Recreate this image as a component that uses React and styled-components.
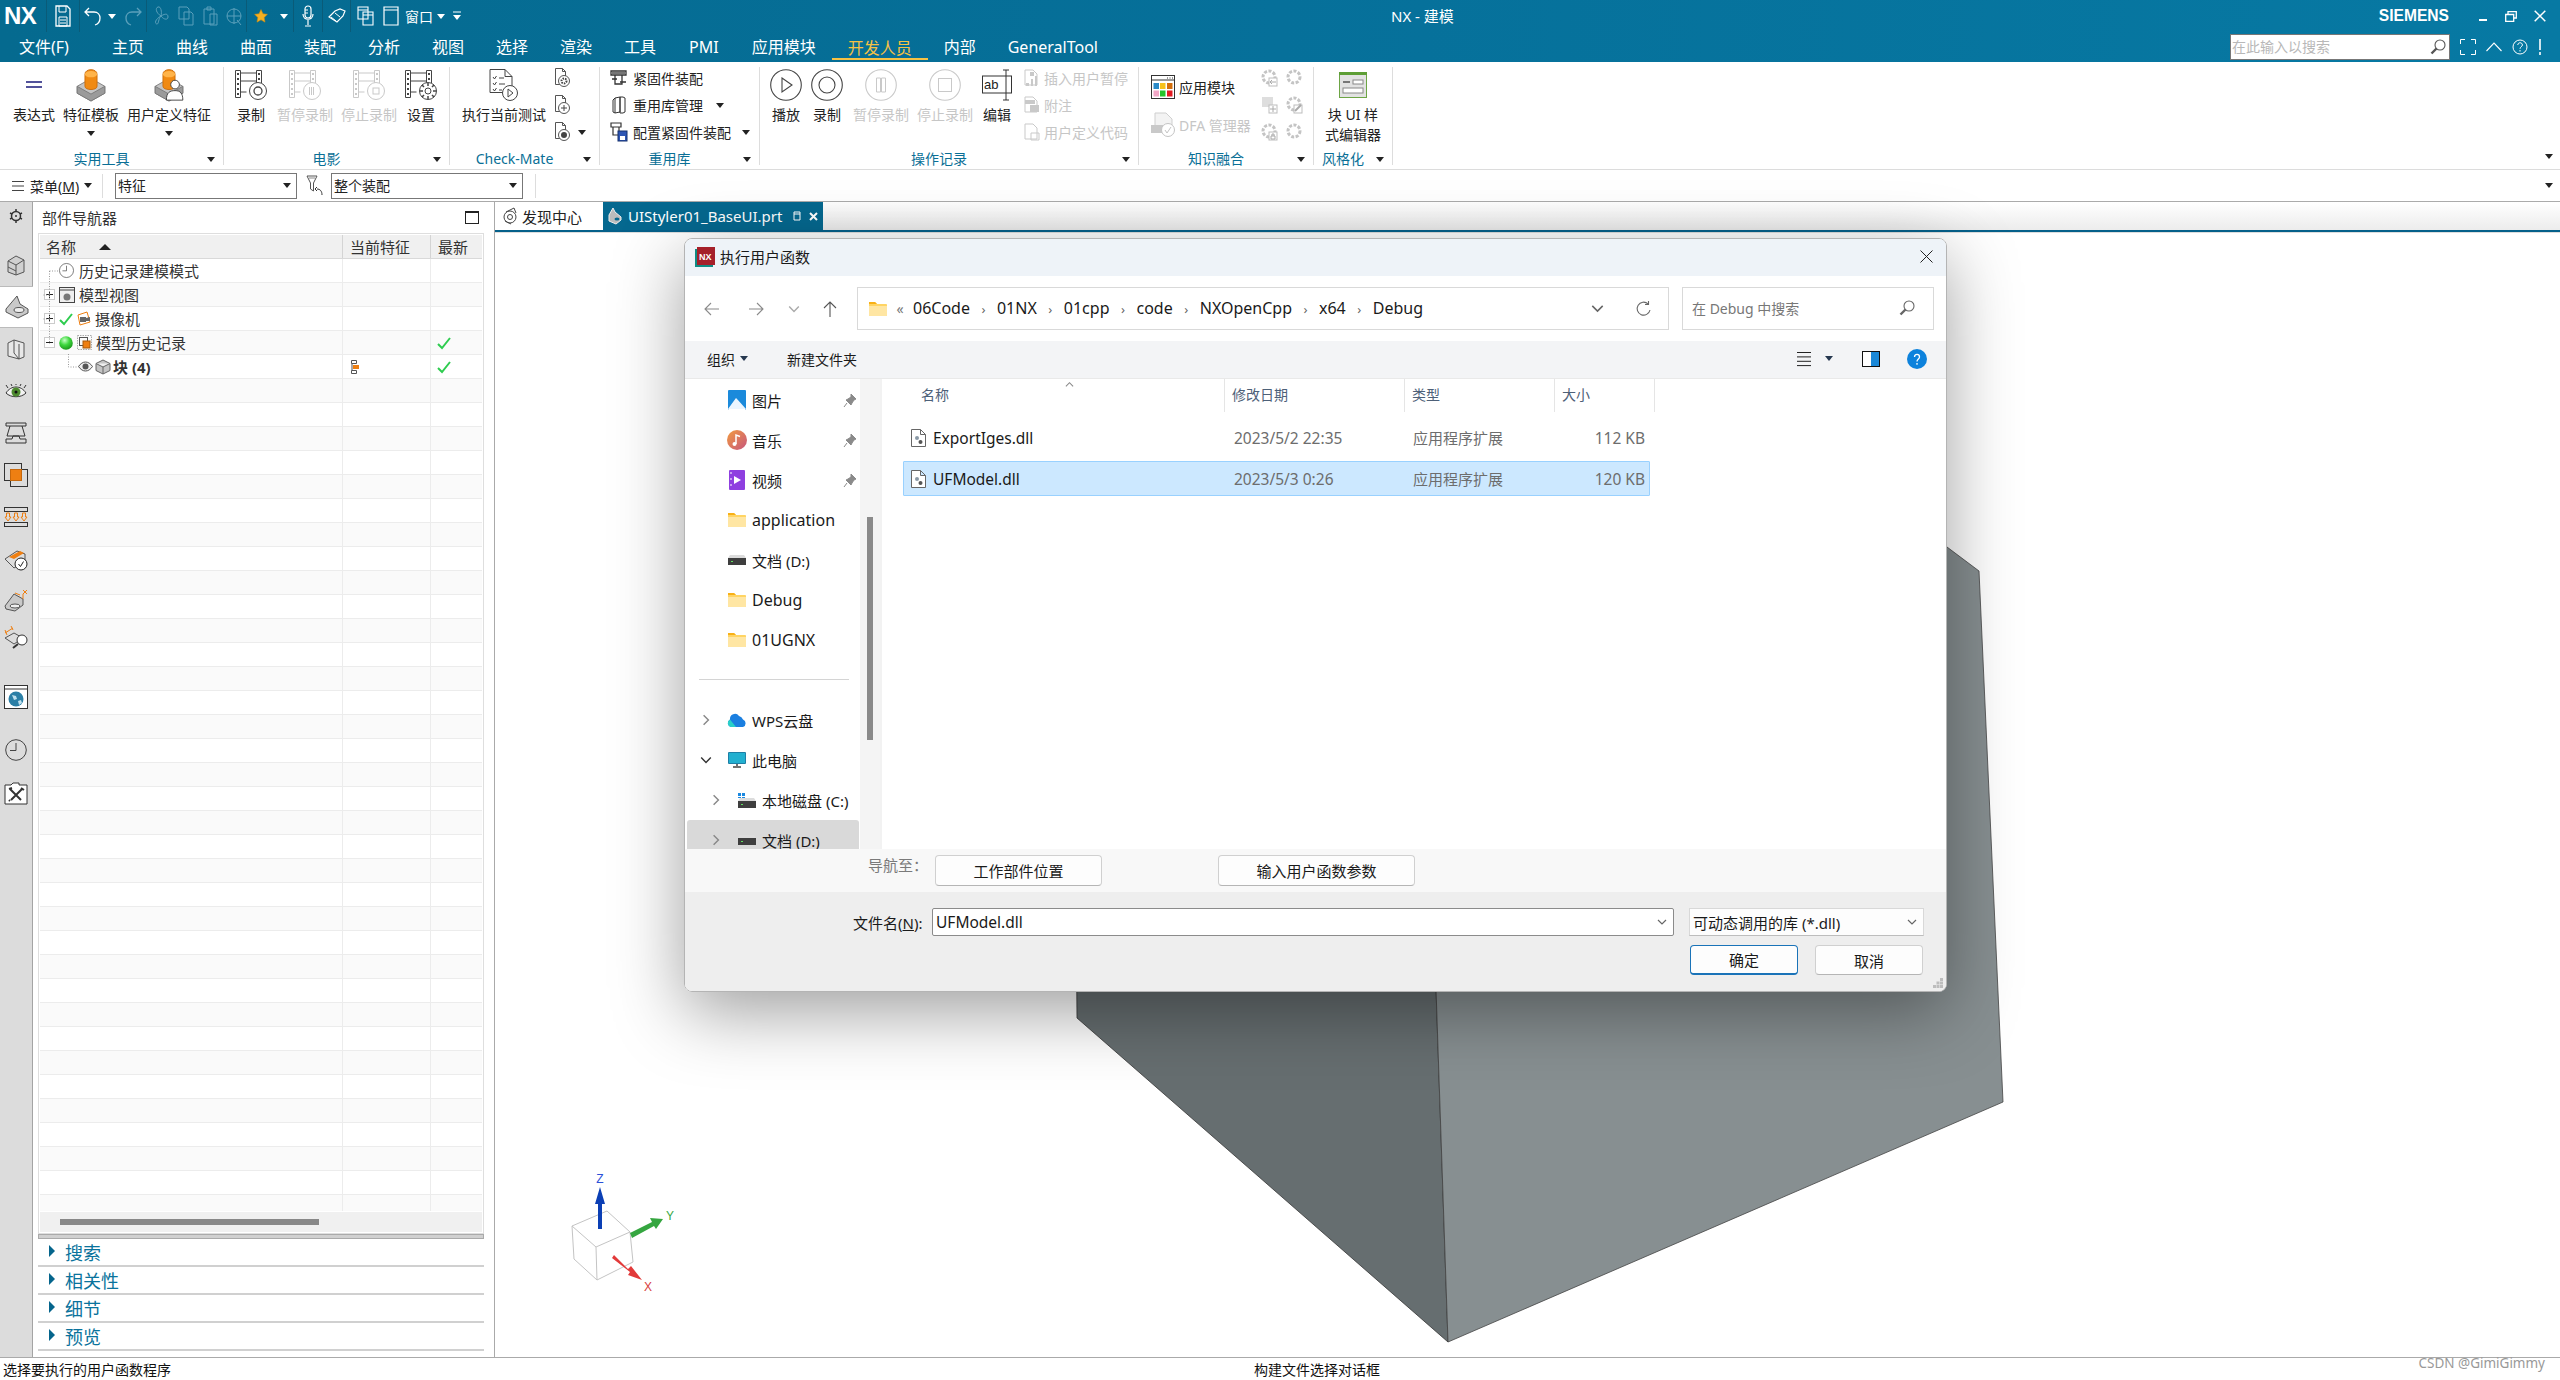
import React from 'react';
import styled, { createGlobalStyle } from 'styled-components';

const FONT = `"Noto Sans","Noto Sans CJK SC",sans-serif`;

const Global = createGlobalStyle`
  html, body { margin: 0; padding: 0; background: #fff; overflow: hidden; }
  body { font-family: ${FONT}; color: #222; }
  * { box-sizing: border-box; }
`;

const Page = styled.div`
  position: relative; width: 2560px; height: 1380px; display: flex; flex-direction: column; overflow: hidden;
`;
const Glyph = styled.svg`display: block; flex: none; overflow: visible;`;
const Ic = ({ w = 16, h = 16, vb, children }) => (
  <Glyph width={w} height={h} viewBox={vb || `0 0 ${w} ${h}`} fill="none">{children}</Glyph>
);

/* ---------- header ---------- */
const Head = styled.header`
  height: 62px; flex: none; color: #fff;
  background: linear-gradient(90deg, #056a8f 0%, #06709a 50%, #0779a3 100%);
`;
const TitleRow = styled.div`display: flex; align-items: center; height: 32px;`;
const Logo = styled.div`
  width: 46px; padding-left: 4px; font: 700 24px/32px "Liberation Sans", sans-serif; letter-spacing: -.5px;
`;
const QuickBtn = styled.div`
  width: ${p => p.$w}px; height: 32px; display: flex; align-items: center; justify-content: center;
  font-size: 14px; white-space: nowrap;
  ${p => p.$sep && 'border-left: 1px solid #0a5b78;'}
`;
const AppTitle = styled.div`margin-left: 923px; font-size: 15px; line-height: 32px; white-space: nowrap;`;
const Brand = styled.div`
  margin-left: auto; font: 700 15.6px/32px "Liberation Sans", sans-serif; letter-spacing: 0;
`;
const WinBtns = styled.div`display: flex; width: 111px; padding-left: 30px; gap: 17px; align-items: center;`;
const MenuRow = styled.div`display: flex; align-items: center; height: 30px; padding-left: 3px;`;
const MenuItem = styled.div`
  position: relative; height: 30px; padding: 0 ${p => p.$pad ?? 16}px; font-size: 16px; line-height: 30px; white-space: nowrap;
  margin-right: ${p => p.$mr || 0}px;
  color: ${p => p.$on ? '#f6c244' : '#fff'};
  ${p => p.$on && 'box-shadow: inset 0 -2px 0 0 #f6c244; height: 28px; margin-top: -2px; line-height: 32px;'}
`;
const HeadSearch = styled.div`
  margin-left: auto; width: 220px; height: 26px; background: #fff; border: 1px solid #777; color: #b8b8b8;
  font-size: 14px; line-height: 24px; display: flex; align-items: center; justify-content: space-between; padding: 0 3px 0 1px;
`;
const HeadTools = styled.div`display: flex; align-items: center; width: 110px; padding-left: 10px; gap: 10px;`;

/* ---------- ribbon ---------- */
const Ribbon = styled.div`
  height: 108px; flex: none; display: flex; background: #fff; border-bottom: 1px solid #dcdcdc;
`;
const Group = styled.section`
  width: ${p => p.$w}px; flex: none; height: 98px; margin-top: 5px; border-right: 1px solid #ddd;
  display: flex; flex-direction: column;
`;
const GroupBody = styled.div`flex: 1; display: flex; align-items: flex-start; min-height: 0;`;
const GroupFoot = styled.div`
  height: 20px; margin-bottom: -4px; display: flex; align-items: center;
  color: #0a6f96; font-size: 14px; line-height: 20px;
`;
const GroupName = styled.div`flex: 1; text-align: center; white-space: nowrap;`;
const Caret = styled.span`
  flex: none; width: 0; height: 0; border-left: 4px solid transparent; border-right: 4px solid transparent;
  border-top: 5px solid ${p => p.$c || '#222'}; margin-left: ${p => p.$ml ?? 0}px; margin-right: ${p => p.$mr ?? 0}px;
`;
const Big = styled.div`
  width: ${p => p.$w}px; margin-left: ${p => p.$ml || 0}px; flex: none;
  display: flex; flex-direction: column; align-items: center;
  color: ${p => p.$dim ? '#c6c6c6' : '#222'}; font-size: 14px; line-height: 20px; white-space: nowrap; text-align: center;
`;
const BigIcon = styled.div`height: 35px; margin-bottom: 3px; display: flex; align-items: center; justify-content: center;`;
const BigCaret = styled.div`height: 16px; display: flex; align-items: center; justify-content: center;`;
const SmallCol = styled.div`
  display: flex; flex-direction: column; gap: 5px; margin-left: ${p => p.$ml || 0}px; flex: none;
  ${p => p.$w && `width: ${p.$w}px;`}
`;
const SmallRow = styled.div`
  height: 22px; display: flex; align-items: center; gap: ${p => p.$gap ?? 4}px; font-size: 14px; white-space: nowrap;
  color: ${p => p.$dim ? '#c6c6c6' : '#222'};
  ${p => p.$center && 'justify-content: center;'}
`;
const WideRow = styled.div`
  height: 38px; display: flex; align-items: center; gap: 4px; padding-left: 12px; font-size: 14px; white-space: nowrap;
  color: ${p => p.$dim ? '#c6c6c6' : '#222'};
`;
const WideCol = styled.div`width: 119px; flex: none; display: flex; flex-direction: column; margin-top: 1px;`;
const RibbonEnd = styled.div`display: flex; height: 5px; margin: auto 7px ${p => p.$mb ?? 10}px auto;`;
const ToolEnd = styled.div`display: flex; height: 5px; margin: 0 7px 0 auto;`;

/* ---------- toolbar ---------- */
const Toolbar = styled.div`
  height: 32px; flex: none; display: flex; align-items: center; padding-left: 12px; background: #fff;
  border-bottom: 1px solid #aaa; font-size: 14px;
`;
const MenuLabel = styled.div`margin-left: 6px; width: 54px; white-space: nowrap;`;
const ToolSep = styled.div`width: 1px; height: 24px; background: #ddd; margin-left: ${p => p.$ml}px; margin-right: ${p => p.$mr}px;`;
const Combo = styled.div`
  width: ${p => p.$w}px; height: 26px; margin-left: ${p => p.$ml || 0}px; border: 1px solid #777; display: flex;
  align-items: center; justify-content: space-between; padding: 0 5px 0 2px; font-size: 14px; line-height: 24px;
`;
const FunnelBox = styled.div`width: 18px; margin-left: 9px; flex: none;`;

/* ---------- main ---------- */
const Main = styled.div`flex: 1; min-height: 0; display: flex;`;
const Rail = styled.nav`
  width: 33px; flex: none; background: #dcdcdc; border-right: 1px solid #a4a4a4; display: flex; flex-direction: column;
`;
const RailItem = styled.div`
  height: ${p => p.$h || 42}px; margin-top: ${p => p.$mt || 0}px; display: flex; align-items: center; justify-content: center;
  ${p => p.$on && 'background: #fff; margin-right: -1px; border-top: 1px solid #bbb; border-bottom: 1px solid #bbb;'}
`;
const Nav = styled.aside`
  width: 462px; flex: none; display: flex; flex-direction: column; background: #fff; border-right: 1px solid #aaa; padding: 0 10px 6px 5px;
`;
const NavHead = styled.div`
  height: 31px; flex: none; display: flex; align-items: center; justify-content: space-between; padding: 0 5px 0 4px; font-size: 15px; color: #333;
`;
const MaxBox = styled.div`width: 14px; height: 13px; border: 1px solid #222; border-top-width: 2px;`;
const Table = styled.div`
  position: relative; flex: 1; min-height: 0; border: 1px solid #dedede; padding: 1px; display: flex; flex-direction: column; overflow: hidden;
`;
const TableRows = styled.div`flex: 1; min-height: 0; overflow: hidden;`;
const Row = styled.div`
  display: grid; grid-template-columns: 303px 88px 1fr; height: 24px;
  background: ${p => p.$head ? '#f0f0f0' : p.$alt ? '#fafafa' : '#fff'};
  border-bottom: 1px solid ${p => p.$head ? '#d9d9d9' : '#ececec'}; font-size: 15px; color: #333;
`;
const Cell = styled.div`
  display: flex; align-items: center; gap: ${p => p.$gap ?? 0}px; padding-left: ${p => p.$pl || 0}px; white-space: nowrap; min-width: 0;
  border-right: 1px solid ${p => p.$head ? '#d4d4d4' : '#ececec'}; font-weight: ${p => p.$bold ? 700 : 400};
  ${p => p.$last && 'border-right: 0;'}
`;
const Expander = styled.span`
  width: 11px; height: 11px; flex: none; border: 1px solid #ccc; background: #fff; position: relative;
  &::before { content: ''; position: absolute; left: 1px; right: 1px; top: 4px; height: 1px; background: #222; }
  ${p => p.$plus && `&::after { content: ''; position: absolute; top: 1px; bottom: 1px; left: 4px; width: 1px; background: #222; }`}
`;
const Guides = styled.svg`position: absolute; left: 0; top: 0; pointer-events: none;`;
const HScroll = styled.div`height: 20px; flex: none; background: #f0f0f0; padding: 7px 0 0 20px; margin-top: 1px;`;
const HThumb = styled.div`width: 259px; height: 6px; background: #888;`;
const Splitter = styled.div`height: 5px; flex: none; background: #d0d0d0; border: 1px solid #aaa; `;
const Section = styled.div`
  height: 28px; flex: none; display: flex; align-items: center; gap: 10px; padding: 2px 0 0 11px; border-bottom: 2px solid #d0d0d0;
  color: #0a739c; font-size: 18px; line-height: 26px;
`;
const Tri = styled.span`
  width: 0; height: 0; border-top: 6px solid transparent; border-bottom: 6px solid transparent; border-left: 6px solid #05658c; margin-top: -4px;
`;
const View = styled.div`flex: 1; min-width: 0; display: flex; flex-direction: column;`;
const Tabs = styled.div`
  height: 30px; flex: none; display: flex; border-bottom: 2px solid #05608a; background: linear-gradient(#fff, #ececec); font-size: 15px;
`;
const Tab = styled.div`
  width: ${p => p.$w}px; flex: none; display: flex; align-items: center; gap: 5px; padding-left: ${p => p.$pl}px; white-space: nowrap;
  background: ${p => p.$on ? '#05688f' : '#fff'}; color: ${p => p.$on ? '#fff' : '#222'};
`;
const TabTail = styled.div`display: flex; align-items: center; gap: 8px; margin-left: 6px;`;
const Canvas = styled.div`position: relative; flex: 1; min-height: 0; background: #fff; border-top: 1px solid #ddd;`;
const Scene = styled.svg`position: absolute; inset: 0; width: 100%; height: 100%;`;
const Status = styled.footer`
  height: 23px; flex: none; border-top: 1px solid #aaa; background: #fff; display: grid; grid-template-columns: 1251px 1fr auto; align-items: center;
  padding: 0 15px 0 3px; font-size: 14px; color: #111;
`;
const StatusMid = styled.div`white-space: nowrap;`;
const Watermark = styled.div`font-size: 13.5px; color: #999; margin-top: -12px; white-space: nowrap;`;

/* ---------- dialog ---------- */
const Dialog = styled.div`
  position: absolute; left: 684px; top: 238px; width: 1263px; height: 754px; display: flex; flex-direction: column;
  border: 1px solid #b4b4b4; border-radius: 8px; background: #fff; overflow: hidden; font-size: 15px; color: #1a1a1a;
`;
const DialogShadow = styled.div`
  position: absolute; left: 684px; top: 238px; width: 1263px; height: 754px; border-radius: 8px;
  box-shadow: 0 20px 70px rgba(0,0,0,.38);
`;
const DTitle = styled.div`
  height: 37px; flex: none; background: #eef3f8; display: flex; align-items: center; padding: 0 13px 2px 10px; gap: 5px;
`;
const DClose = styled.div`margin-left: auto;`;
const Addr = styled.div`height: 65px; flex: none; display: flex; align-items: center; padding-left: 5px;`;
const NavBtn = styled.div`width: ${p => p.$w}px; flex: none; display: flex; justify-content: center; align-items: center; margin-left: ${p => p.$ml || 0}px;`;
const PushRight = styled.div`margin-left: auto; display: flex; align-items: center;`;
const PathBox = styled.div`
  width: 812px; height: 43px; margin-left: 7px; border: 1px solid #d9d9d9; flex: none; display: flex; align-items: center; padding-left: 11px;
`;
const Crumb = styled.span`white-space: nowrap; font-size: 16px; line-height: 38px; margin-top: -2px;`;
const CrumbSep = styled.span`width: 27px; text-align: center; color: #666; font-size: 13px; flex: none;`;
const Laquo = styled.span`width: 26px; text-align: center; color: #777; font-size: 14px; flex: none;`;
const SearchBox = styled.div`
  width: 252px; height: 43px; margin-left: 13px; border: 1px solid #d9d9d9; display: flex; align-items: center; justify-content: space-between;
  padding: 0 18px 2px 9px; color: #777; font-size: 14px; flex: none;
`;
const Band = styled.div`
  height: 38px; flex: none; background: #f3f4f6; border-bottom: 1px solid #e9e9e9; display: flex; align-items: center; padding: 0 19px 2px 22px; font-size: 14px;
`;
const BandBtn = styled.div`display: flex; align-items: center; gap: 5px; white-space: nowrap; margin-left: ${p => p.$ml || 0}px;`;
const Body = styled.div`flex: 1; min-height: 0; display: flex;`;
const Side = styled.div`width: 175px; flex: none; padding-top: 1px; overflow: hidden;`;
const SideRow = styled.div`
  position: relative; height: 40px; display: flex; align-items: center; padding-left: ${p => 14 + (p.$lvl || 0) * 10 - (p.$sel ? 2 : 0)}px; padding-right: 4px; white-space: nowrap;
  font-size: ${p => p.$latin ? 16 : 15}px;
  ${p => p.$sel && 'background: #d9d9d9; border-radius: 3px; margin: 0 1px 0 2px;'}
`;
const SideChev = styled.div`width: 14px; flex: none; margin-right: 15px; display: flex; justify-content: center;`;
const SideIcon = styled.div`width: 18px; flex: none; margin-right: 6px; display: flex; justify-content: center; align-items: center;`;
const Pin = styled.div`margin-left: auto;`;
const SideRule = styled.div`height: 40px; padding: 19px 11px 0 14px;`;
const SideRuleLine = styled.div`height: 1px; background: #d4d4d4;`;
const Track = styled.div`width: 20px; flex: none; background: #f4f4f4; padding: 138px 7px 0; border-right: 2px solid #f4f4f4; `;
const Thumb = styled.div`width: 6px; height: 223px; background: #8a8a8a;`;
const List = styled.div`flex: 1; min-width: 0; border-left: 2px solid #f2f2f2; position: relative;`;
const ListHead = styled.div`display: grid; grid-template-columns: 343px 180px 150px 100px; height: 33px; width: 773px;`;
const HCol = styled.div`
  border-right: 1px solid #e5e5e5; padding-left: ${p => p.$pl}px; color: #4d6078; font-size: 14px; line-height: 32px; white-space: nowrap;
`;
const SortMark = styled.div`position: absolute; left: 183px; top: 1px;`;
const FileRow = styled.div`
  margin: ${p => p.$first ? 8 : 6}px 0 0 21px; width: 747px; height: 35px; display: grid; grid-template-columns: 322px 179px 151px 1fr; align-items: center;
  border: 1px solid ${p => p.$sel ? '#99d1ff' : 'transparent'}; background: ${p => p.$sel ? '#cce8ff' : 'transparent'}; border-radius: 1px;
  color: #6d6d6d; font-size: 15.5px; white-space: nowrap;
`;
const FileName = styled.div`display: flex; align-items: center; gap: 7px; padding-left: 7px; color: #1a1a1a;`;
const FileCol = styled.div`
  padding-left: ${p => p.$pl || 8}px; padding-right: ${p => p.$pr || 0}px; text-align: ${p => p.$right ? 'right' : 'left'};
  ${p => p.$cjk && 'font-size: 15px;'}
`;
const Foot1 = styled.div`height: 43px; flex: none; background: #f8f8f8; display: flex; align-items: flex-start; padding: 6px 0 0 183px;`;
const GoLabel = styled.div`width: 67px; color: #7a7a7a; font-size: 15px; line-height: 20px; white-space: nowrap;`;
const PushBtn = styled.div`
  width: ${p => p.$w}px; height: ${p => p.$h || 31}px; margin-left: ${p => p.$ml || 0}px; flex: none; background: #fdfdfd;
  border: 1px solid ${p => p.$primary ? '#1a73b8' : '#d0d0d0'}; border-radius: 4px; display: flex; align-items: center; justify-content: center;
  ${p => p.$primary ? 'border-bottom-width: 2px;' : 'border-bottom-color: #b5b5b5;'}
  font-size: 15px; white-space: nowrap;
`;
const Foot2 = styled.div`position: relative; height: 99px; flex: none; background: #eee; padding-top: 16px;`;
const NameRow = styled.div`display: flex; align-items: center; padding-left: 168px; height: 28px;`;
const NameLabel = styled.div`width: 79px; white-space: nowrap;`;
const NameInput = styled.div`
  width: 742px; height: 28px; flex: none; background: #fff; border: 1px solid #8b8b8b; border-radius: 2px; font-size: 15.5px;
  display: flex; align-items: center; justify-content: space-between; padding: 0 6px 0 3px;
`;
const FilterSel = styled.div`
  width: 235px; height: 28px; flex: none; margin-left: 15px; background: #fdfdfd; border: 1px solid #d8d8d8; border-bottom-color: #bdbdbd;
  display: flex; align-items: center; justify-content: space-between; padding: 0 6px 0 3px; white-space: nowrap;
`;
const BtnRow = styled.div`display: flex; justify-content: flex-end; gap: 17px; margin-top: 9px; padding-right: 23px;`;
const Grip = styled.div`position: absolute; right: 3px; bottom: 3px;`;

/* ---------- icons ---------- */
const Chev = ({ dir = 'down', c = '#666', s = 10 }) => {
  const d = { down: 'M1 3l4 4 4-4', up: 'M1 7l4-4 4 4', right: 'M3 1l4 4-4 4' }[dir];
  return <Ic w={s} h={s} vb="0 0 10 10"><path d={d} stroke={c} strokeWidth="1.2" /></Ic>;
};
const Wh = '#fff';
const Dm = '#5ba0bb';
const QSave = () => <Ic w={16} h={22}><path d="M1 1h11l3 3v17H1z" stroke={Wh} strokeWidth="1.3" /><path d="M4 1v6h7V1M4 12h8v9H4zM5 15h6M5 18h6" stroke={Wh} /></Ic>;
const QUndo = ({ c = Wh, flip }) => <Ic w={18} h={20}><g transform={flip ? 'translate(18 0) scale(-1 1)' : undefined}><path d="M5 2L1 6l4 4M1 6h9c4 0 6 3 6 6 0 3-2 6-5 7" stroke={c} strokeWidth="1.3" /></g></Ic>;
const QFan = () => <Ic w={16} h={22}><path d="M8 11C3 8 2 3 5 2s4 5 3 9zm0 0c5-3 7-2 7 1s-4 3-7-1zm0 0c-3 3-2 8-4 8s-3-4 4-8z" stroke={Dm} /></Ic>;
const QCopy = () => <Ic w={16} h={20}><path d="M1 1h8l2 2v10H1zM6 6h7l2 2v11H6z" stroke={Dm} /></Ic>;
const QPaste = () => <Ic w={16} h={20}><path d="M2 3h10v15H2zM5 1h4v3H5zM8 8h7v11H8z" stroke={Dm} /></Ic>;
const QDel = () => <Ic w={16} h={20}><circle cx="8" cy="10" r="7" stroke={Dm} /><path d="M8 2v16M1 10h14M11 14l4 5" stroke={Dm} /></Ic>;
const QStar = () => <Ic w={14} h={14} vb="0 0 24 24"><path d="M12 1l3.4 7.3 7.6.9-5.6 5.4 1.5 7.9L12 18.6l-6.9 3.9 1.5-7.9L1 9.2l7.6-.9z" fill="#f6b021" stroke="#c98a10" /></Ic>;
const QMic = () => <Ic w={12} h={22}><rect x="3" y="1" width="6" height="12" rx="3" stroke={Wh} strokeWidth="1.2" /><path d="M3 5h3M3 8h3" stroke={Wh} /><path d="M1 9c0 7 10 7 10 0M6 15v5M3 21h6" stroke={Wh} strokeWidth="1.2" /></Ic>;
const QTag = () => <Ic w={18} h={16}><path d="M1 9l6-6 5-2 5 2-2 5-6 6z" stroke={Wh} strokeWidth="1.2" /><path d="M3 9l5 4M7 5l5 4" stroke={Wh} /></Ic>;
const QWins = () => <Ic w={17} h={20}><path d="M1 1h10v12H1zM1 4h10M6 6h10v13H6zM6 9h10" stroke={Wh} strokeWidth="1.1" fill="#06709a" /></Ic>;
const QWin = () => <Ic w={16} h={20}><path d="M1 1h14v18H1zM1 4h14" stroke={Wh} strokeWidth="1.2" /></Ic>;
const LineCaret = () => <Ic w={8} h={10}><path d="M0 1h8" stroke={Wh} /><path d="M0 4h8L4 9z" fill={Wh} /></Ic>;
const WinMin = () => <Ic w={9} h={10}><path d="M0 9h8" stroke={Wh} strokeWidth="2" /></Ic>;
const WinRes = () => <Ic w={12} h={11}><path d="M3 3V.7h8.3V7H9M.7 3.5h8v6.8h-8z" stroke={Wh} strokeWidth="1.3" /></Ic>;
const WinX = () => <Ic w={12} h={12}><path d="M.7.7l10.6 10.6M11.3.7L.7 11.3" stroke={Wh} strokeWidth="1.5" /></Ic>;
const Magn = ({ c = '#555' }) => <Ic w={16} h={16}><circle cx="10" cy="6" r="5" stroke={c} strokeWidth="1.1" /><path d="M6.5 9.5L1.5 14.5" stroke={c} strokeWidth="2.4" /></Ic>;
const Fullscr = () => <Ic w={16} h={16}><path d="M.5 5V.5H5M11 .5h4.5V5M15.5 11v4.5H11M5 15.5H.5V11" stroke={Wh} /></Ic>;
const UpWide = () => <Ic w={16} h={10}><path d="M.5 9L8 1l7.5 8" stroke={Wh} strokeWidth="1.1" /></Ic>;
const HelpO = () => <Ic w={16} h={16}><circle cx="8" cy="8" r="7" stroke={Wh} /><path d="M5.8 6c0-3 4.6-3 4.6 0 0 1.800-2.400 1.800-2.400 3.800M8 11v1.500" stroke={Wh} /></Ic>;
const Bang = () => <Ic w={4} h={16}><path d="M2 0v11M2 13v3" stroke={Wh} strokeWidth="1.6" /></Ic>;

const Cylinder = () => (
  <>
    <path d="M0 20l16-9 16 9v8l-16 9-16-9z" fill="#c4c4c4" stroke="#777" />
    <path d="M0 20l16 9 16-9v8l-16 9-16-9z" fill="#9b9b9b" stroke="#777" />
    <path d="M9 6c0-7 14-7 14 0v14c0 5-14 5-14 0z" fill="#f08a13" stroke="#c86a08" />
    <ellipse cx="16" cy="6" rx="7" ry="3.600" fill="#ffb44a" />
  </>
);
const Template = () => <Ic w={32} h={32} vb="0 0 32 37"><Cylinder /></Ic>;
const UserFeat = () => (
  <Ic w={32} h={32} vb="0 0 32 37"><Cylinder />
    <circle cx="23" cy="18" r="5" fill="#fff" stroke="#333" />
    <path d="M13 36c0-9 4-11 10-11s9 3 9 11z" fill="#fff" stroke="#333" />
  </Ic>
);
const Expr = () => <Ic w={20} h={10}><path d="M2 2h16M2 7h16" stroke="#1a1a7a" strokeWidth="1.500" /></Ic>;
const Film = ({ dim, badge }) => {
  const c = dim ? '#c9c9c9' : '#444';
  return (
    <Ic w={32} h={30}>
      <path d="M.5.5h5v27h-5zM21.500.5h5v13h-5zM5.500 3h16M5.500 11h16M5.500 22h6" stroke={c} />
      <path d="M2 3h2v2H2zM2 8h2v2H2zM2 13h2v2H2zM2 18h2v2H2zM2 23h2v2H2zM23 3h2v2h-2zM23 8h2v2h-2z" fill={c} />
      <circle cx="23" cy="21" r="8.500" fill="#fff" stroke={c} />
      {badge === 'rec' && <circle cx="23" cy="21" r="4" stroke={c} strokeWidth="1.300" />}
      {badge === 'pause' && <path d="M20.500 17v8M22.500 17v8M24.500 17v8" stroke={c} />}
      {badge === 'stop' && <rect x="20" y="18" width="6" height="6" stroke={c} />}
      {badge === 'gear' && <><circle cx="23" cy="21" r="3" stroke={c} /><path d="M23 13v3M23 26v3M15 21h3M28 21h3M17 15l2 2M27 25l2 2M29 15l-2 2M19 25l-2 2" stroke={c} strokeWidth="1.500" /></>}
    </Ic>
  );
};
const Round = ({ kind, dim }) => {
  const c = dim ? '#c9c9c9' : '#444';
  return (
    <Ic w={32} h={32}>
      <circle cx="16" cy="16" r="15.300" stroke={c} strokeWidth="1.100" fill="#fff" />
      {kind === 'play' && <path d="M12 9l10 7-10 7z" stroke={c} strokeWidth="1.100" />}
      {kind === 'rec' && <circle cx="16" cy="16" r="8" stroke={c} strokeWidth="1.100" />}
      {kind === 'pause' && <path d="M11.500 9h4v14h-4zM16.500 9h4v14h-4z" stroke={c} />}
      {kind === 'stop' && <rect x="9.500" y="9.500" width="13" height="13" stroke={c} />}
    </Ic>
  );
};
const EditAb = () => (
  <Ic w={30} h={32}>
    <rect x=".5" y="7" width="29" height="17" stroke="#333" />
    <path d="M21 1h6M21 31h6M24 1v30" stroke="#333" />
    <text x="2" y="20" fontSize="13" fill="#222" fontFamily="Liberation Sans">ab</text>
  </Ic>
);
const Checklist = () => (
  <Ic w={30} h={32}>
    <path d="M1 .5h15l7 7v16H1zM16 .5v7h7" stroke="#444" />
    <path d="M4 8l1.500 2 2-3M10 9h5M4 14l1.500 2 2-3M10 15h6M4 20l1.500 2 2-3M10 21h3" stroke="#444" />
    <circle cx="21" cy="24" r="7.500" fill="#fff" stroke="#444" /><path d="M19 20l5 4-5 4z" stroke="#444" />
  </Ic>
);
const SmallDoc = ({ kind }) => (
  <Ic w={15} h={20}>
    <path d="M.5.500h7l3 3v13h-10zM7.500.500v3h3" stroke="#555" />
    <circle cx="9" cy="13" r="5.500" fill="#fff" stroke="#555" />
    {kind === 'plus' && <path d="M9 10v6M6 13h6" stroke="#444" />}
    {kind === 'rec' && <circle cx="9" cy="13" r="3" fill="#444" />}
    {kind === 'gear' && <circle cx="9" cy="13" r="2.500" stroke="#444" strokeDasharray="1.500 1" strokeWidth="2" />}
  </Ic>
);
const Fastener = () => <Ic w={18} h={16}><path d="M1 1h15v4H1zM5 5h7v9H5zM2 9h5M10 12h6" stroke="#333" strokeWidth="1.300" /><path d="M2 2h13v2H2z" fill="#777" /></Ic>;
const Books = () => <Ic w={14} h={18}><path d="M3 2l5-1v15l-5 1zM8 1h3l2 1v14l-2 1H8zM3 2L1 4v12l2 1" stroke="#333" /></Ic>;
const Fastener2 = () => <Ic w={18} h={20}><path d="M1 1h10v4H1zM3 5h6v8H3z" stroke="#333" strokeWidth="1.200" /><rect x="8" y="9" width="9" height="10" fill="#2d55b4" stroke="#14306e" /><rect x="10" y="14" width="5" height="4" fill="#fff" /></Ic>;
const DimDoc = ({ t }) => (
  <Ic w={16} h={18}>
    <path d="M1 1h8l4 4v11H1z" stroke="#c9c9c9" />
    {t === 'bars' && <path d="M2 14h3v3H2zM7 10h2v7H7zM11 7h2v10h-2zM6 3h4v4H6z" fill="#c9c9c9" />}
    {t === 'note' && <path d="M1 4h10v4H1zM6 9h9v7H6z" fill="#c9c9c9" />}
    {t === 'code' && <path d="M7 10h8v7H7z" stroke="#c9c9c9" />}
  </Ic>
);
const AppMod = () => (
  <Ic w={24} h={24}>
    <rect x=".5" y=".5" width="23" height="23" stroke="#333" fill="#fff" />
    <path d="M1 5h22" stroke="#333" />
    <path d="M16 3h1M18.500 3h1M21 3h1" stroke="#333" />
    <rect x="2.500" y="8" width="5.500" height="6" fill="#2a8ac8" /><rect x="9" y="8" width="5.500" height="6" fill="#f7c21c" /><rect x="16" y="8" width="5.500" height="6" fill="#d46f0c" />
    <rect x="2.500" y="15.500" width="5.500" height="6" fill="#f2a6c6" /><rect x="9" y="15.500" width="5.500" height="6" fill="#25c42a" /><rect x="16" y="15.500" width="5.500" height="6" fill="#e41b23" />
  </Ic>
);
const DfaDoc = () => (
  <Ic w={24} h={26}>
    <path d="M4 1h11l6 6v10H4z" stroke="#cfcfcf" fill="#f3f3f3" />
    <rect x="0" y="13" width="12" height="8" fill="#c9c9c9" />
    <circle cx="17" cy="18" r="6.500" fill="#fff" stroke="#c4c4c4" /><path d="M14 18l2 3 4-6" stroke="#c4c4c4" />
  </Ic>
);
const KfGear = ({ m }) => (
  <Ic w={18} h={18}>
    {m === 'plus'
      ? <path d="M1 1h11v10H1z" fill="#dedede" />
      : <circle cx="8" cy="8" r="6" stroke="#c4c4c4" strokeWidth="3" strokeDasharray="3 1.500" />}
    {m !== 'none' && <rect x="8" y="9" width="8" height="8" fill="#fff" stroke="#bdbdbd" />}
    {m === 'plus' && <path d="M12 10v6M9 13h6" stroke="#aaa" />}
    {m === 'arrow' && <path d="M15 13H9M11 11l-2 2 2 2" stroke="#aaa" />}
    {m === 'lock' && <path d="M10 13h4v3h-4zM11 13v-2h2v2" stroke="#aaa" />}
    {m === 'pen' && <path d="M9 15l6-6" stroke="#aaa" strokeWidth="2" />}
  </Ic>
);
const BlockUI = () => (
  <Ic w={28} h={26}>
    <rect x=".5" y=".5" width="27" height="25" fill="#e2e2e2" stroke="#6da545" />
    <rect x="0" y="0" width="28" height="3" fill="#5e9e36" />
    <path d="M4 10h7" stroke="#777" strokeWidth="2" />
    <rect x="14" y="8" width="10" height="4" fill="#fff" stroke="#888" />
    <rect x="4" y="16" width="20" height="5" fill="#fff" stroke="#888" />
  </Ic>
);
const Funnel = () => <Ic w={18} h={22}><path d="M1 1h10L7.500 8v8l-3-2V8z" stroke="#555" /><path d="M3 3h6" stroke="#888" /><path d="M16 20c0-4-2-6-5-6M11 12l-2 2 2 2" stroke="#333" /></Ic>;
const Hamb = () => <Ic w={12} h={10}><path d="M0 .5h12M0 5h12M0 9.500h12" stroke="#444" /></Ic>;

const RGear = () => <Ic w={14} h={16}><circle cx="7" cy="8" r="4.500" stroke="#333" strokeWidth="1.500" /><circle cx="7" cy="8" r="1" fill="#333" /><path d="M7 1v2M7 13v2M1 5l2 1M11 10l2 1M1 11l2-1M11 6l2-1" stroke="#333" strokeWidth="1.500" /></Ic>;
const RParts = () => <Ic w={18} h={22}><path d="M1 7l8-5 8 4v12l-8 3-8-3z" fill="#d0d0d0" stroke="#555" /><path d="M1 7l8 4 8-5M9 11v10M1 13l8 4" stroke="#555" /></Ic>;
const RSolid = () => <Ic w={24} h={24}><path d="M1 14L12 1l3 8 8 5v4L13 23 1 17z" fill="#c9c9c9" stroke="#555" /><ellipse cx="14" cy="15" rx="5" ry="2.500" fill="#eee" stroke="#555" /></Ic>;
const RBooks = () => <Ic w={18} h={22}><path d="M1 5l6-3 10 3v14l-5 2-11-3zM7 2v13M12 6v15M7 15l5 6" stroke="#555" fill="#e8e8e8" /></Ic>;
const REye = () => <Ic w={22} h={14}><path d="M1 9c5-8 15-8 20 0-5 5-15 5-20 0z" fill="#f3f3f3" stroke="#333" /><circle cx="11" cy="8" r="4.500" fill="#4d8a2e" /><circle cx="11" cy="8" r="1.500" fill="#111" /><path d="M3 4L1 1M7 2L6 0M11 1V0M15 2l1-2M19 4l2-3" stroke="#333" /></Ic>;
const RPress = () => <Ic w={22} h={22}><path d="M1 1h20v3H1zM5 4L2 14h18L17 4M1 21v-4h6l1-3h6l1 3h6v4z" stroke="#333" /></Ic>;
const ROverlap = () => <Ic w={24} h={24}><rect x=".5" y=".5" width="17" height="17" stroke="#333" /><rect x="6.500" y="6.500" width="17" height="17" stroke="#333" /><rect x="6.500" y="6.500" width="11" height="11" fill="#ee7f12" stroke="#c7680c" /></Ic>;
const RDrop = () => (
  <Ic w={24} h={20}>
    <rect x=".5" y=".5" width="23" height="4" stroke="#333" /><rect x=".5" y="15.500" width="23" height="4" stroke="#333" />
    {[1, 9, 17].map(x => <path key={x} d={`M${x + 1.500} 6h3v4h1.500l-3 4-3-4h1.500z`} stroke="#ee7f12" />)}
  </Ic>
);
const RCheckDoc = () => <Ic w={24} h={24}><path d="M1 12l12-8 8 3v7L10 21z" fill="#ddd" stroke="#555" /><path d="M5 10l11-6 4 2-10 6z" fill="#ee7f12" /><circle cx="17" cy="17" r="6" fill="#fff" stroke="#222" /><path d="M14.500 17l2 2.500 3-5" stroke="#222" /></Ic>;
const RMeasure = () => <Ic w={24} h={24}><path d="M1 17l9-12 9 5v6l-8 6-9-2z" fill="#c9c9c9" stroke="#555" /><ellipse cx="11" cy="17" rx="5" ry="2" fill="#eee" stroke="#555" /><path d="M11 4l5 2M19 1l4 4M23 1l-4 4M19 10V5" stroke="#ee7f12" /></Ic>;
const RSearch = () => <Ic w={24} h={24}><path d="M1 12l9-5 9 5-9 6z" fill="#ddd" stroke="#555" /><path d="M1 7l8-5M1 4l2 5M7 0l2 4" stroke="#ee7f12" /><circle cx="18" cy="14" r="5" fill="#fff" stroke="#333" /><path d="M14 18l-5 4" stroke="#333" strokeWidth="2" /></Ic>;
const RGlobe = () => <Ic w={24} h={24}><rect x=".5" y=".5" width="23" height="23" fill="#fff" stroke="#333" /><path d="M1 4h22" stroke="#333" /><circle cx="12" cy="14" r="7.500" fill="#2b7fa6" /><path d="M8 10l4 1 1 3-3 1zM14 16l3-1 1 3-3 2z" fill="#bfe0ee" /></Ic>;
const Clock = ({ s = 22 }) => <Ic w={s} h={s} vb="0 0 22 22"><circle cx="11" cy="11" r="10.300" stroke="#444" /><path d="M11 4v7.500H5" stroke="#444" /></Ic>;
const RTools = () => <Ic w={24} h={24}><path d="M1 4h6l2-2h6v2h8v19H1z" fill="#fff" stroke="#333" /><path d="M6 8l11 11M18 8L7 19M5 8l3-1M17 7l3 2M6 20l-1-1" stroke="#333" strokeWidth="2" /></Ic>;

const TWin = () => <Ic w={16} h={16}><rect x=".5" y=".5" width="15" height="15" fill="#eee" stroke="#444" /><path d="M1 3h14" stroke="#444" /><circle cx="8" cy="10" r="3.500" fill="#777" /></Ic>;
const TCheck = () => <Ic w={14} h={12}><path d="M1 7l4 4 8-10" stroke="#2ecc4f" strokeWidth="2" /></Ic>;
const TCam = () => <Ic w={14} h={15}><path d="M1 4l9-3 3 10-10 3z" stroke="#ee7f12" /><rect x="3" y="6" width="6" height="5" fill="#666" /><path d="M9 7l4-1v4l-4 0z" fill="#666" /></Ic>;
const TSphere = () => <Ic w={14} h={14}><defs><radialGradient id="sph" cx=".4" cy=".3" r=".7"><stop offset="0" stopColor="#c8ffc8" /><stop offset=".5" stopColor="#3fd83f" /><stop offset="1" stopColor="#1c9a1c" /></radialGradient></defs><circle cx="7" cy="7" r="6.800" fill="url(#sph)" /></Ic>;
const THist = () => <Ic w={15} h={15}><rect x=".5" y=".5" width="14" height="14" stroke="#aaa" strokeDasharray="1.500 1" /><rect x="2.500" y="2.500" width="8" height="8" stroke="#555" /><rect x="6" y="6" width="7" height="7" fill="#ee7f12" stroke="#a85a0a" /></Ic>;
const TEye = () => <Ic w={15} h={11}><path d="M.5 5.500c4-6 10-6 14 0-4 6-10 6-14 0z" stroke="#555" fill="#eee" /><circle cx="7.500" cy="5.500" r="3" fill="#555" /></Ic>;
const TCube = () => <Ic w={16} h={16}><path d="M8 1l7 3.500v7L8 15l-7-3.500v-7z" fill="#c4c4c4" stroke="#666" /><path d="M1 4.500L8 8l7-3.500" fill="#eee" stroke="#666" /><path d="M8 8v7" stroke="#666" /></Ic>;
const TBlockMark = () => <Ic w={8} h={14}><path d="M.5.500h5v3h-5zM.5 10.500h5v3h-5zM1 3.500v7" stroke="#555" /><rect x="2" y="5" width="6" height="4" fill="#ee7f12" /></Ic>;
const SortUp = () => <Ic w={12} h={6}><path d="M6 0l6 6H0z" fill="#222" /></Ic>;

const TDisc = () => <Ic w={14} h={18}><circle cx="7" cy="10" r="6" stroke="#444" /><circle cx="7" cy="10" r="2.500" stroke="#444" /><path d="M3 5l8-4 2 5M2 14l6 3" stroke="#444" /></Ic>;
const TPart = () => <Ic w={15} h={18}><path d="M5 1l2 4 6 5v3l-5 4-7-3V8z" fill="#bcbcbc" stroke="#eee" /><ellipse cx="9" cy="12" rx="2.500" ry="1.500" fill="#05688f" /></Ic>;
const TabPin = () => <Ic w={8} h={10}><path d="M1 1h6v8H1z" stroke="#fff" /><path d="M1 3h6" stroke="#fff" /></Ic>;
const TabX = () => <Ic w={9} h={9}><path d="M1 1l7 7M8 1L1 8" stroke="#fff" strokeWidth="2" /></Ic>;

const NxMark = () => (
  <Ic w={20} h={20}>
    <rect x="0" y="2" width="18" height="18" fill="#0f8c84" /><rect x="2" y="0" width="18" height="18" fill="#a5202a" />
    <text x="4" y="13" fontSize="9" fontWeight="700" fill="#fff" fontFamily="Liberation Sans">NX</text>
  </Ic>
);
const XThin = () => <Ic w={13} h={13}><path d="M.5.500l12 12M12.500.500l-12 12" stroke="#222" /></Ic>;
const Arrow = ({ dir, c }) => <Ic w={16} h={14}><path d={dir === 'left' ? 'M15 7H1M7 1L1 7l6 6' : 'M1 7h14M9 1l6 6-6 6'} stroke={c} strokeWidth="1.100" /></Ic>;
const ArrowUp = () => <Ic w={14} h={16}><path d="M7 16V1M1 7l6-6 6 6" stroke="#555" strokeWidth="1.100" /></Ic>;
const Refresh = () => <Ic w={16} h={16}><path d="M14 9a6.500 6.500 0 1 1-2-6.200" stroke="#666" strokeWidth="1.100" /><path d="M12.500 0v3.500H9" stroke="#666" strokeWidth="1.100" /></Ic>;
const Folder = () => <Ic w={18} h={14}><path d="M0 1.500C0 .7.500 0 1 0h5l2 2h9c.6 0 1 .5 1 1v10c0 .6-.4 1-1 1H1c-.6 0-1-.4-1-1z" fill="#ffd463" /><path d="M0 0h6l2 2H0z" fill="#f8b016" /><path d="M0 4h18v9.500c0 .3-.2.500-.5.500H.5c-.3 0-.5-.2-.5-.500z" fill="#ffe6a3" /></Ic>;
const ListView = () => <Ic w={14} h={14}><path d="M0 .5h14M0 4.900h14M0 9.300h14M0 13.600h14" stroke="#222" /></Ic>;
const PaneIc = () => <Ic w={18} h={16}><rect x=".5" y=".5" width="17" height="15" fill="#fff" stroke="#111" /><rect x="9" y="1" width="8" height="14" fill="#1a88d8" /></Ic>;
const HelpBlue = () => <Ic w={20} h={20}><circle cx="10" cy="10" r="10" fill="#0d82dc" /><path d="M7.500 8c0-3.500 5-3.500 5 0 0 2-2.500 2-2.500 4.500M10 14v1.800" stroke="#fff" strokeWidth="1.300" /></Ic>;
const SPic = () => <Ic w={18} h={20}><rect width="18" height="20" rx="1" fill="#1b8adb" /><path d="M0 20l8-11 10 11z" fill="#fff" /><path d="M9 9l-1-1-8 11h18z" fill="#eaf5ff" /></Ic>;
const SMusic = () => <Ic w={20} h={20}><defs><linearGradient id="mus" x1="0" y1="0" x2="1" y2="1"><stop offset="0" stopColor="#f29b3f" /><stop offset="1" stopColor="#c6557e" /></linearGradient></defs><circle cx="10" cy="10" r="10" fill="url(#mus)" /><path d="M9 14V5l4 1.500" stroke="#fff" strokeWidth="1.500" /><circle cx="7.500" cy="14" r="2" fill="#fff" /></Ic>;
const SVideo = () => <Ic w={16} h={20}><rect width="16" height="20" rx="1" fill="#8f3fe0" /><path d="M5 6l7 4-7 4z" fill="#fff" /><path d="M1 3h2M1 9h2M1 15h2" stroke="#fff" /></Ic>;
const Drive = ({ win }) => (
  <Ic w={18} h={win ? 15 : 10}>
    <g transform={win ? 'translate(0 5)' : undefined}>
      <path d="M2 0h14l2 3H0z" fill="#dcdcdc" /><rect y="3" width="18" height="7" fill="#3e3e3e" /><rect x="3" y="6" width="2" height="1" fill="#5fe05f" />
    </g>
    {win && <path d="M0 0h3v3H0zM4 0h3v3H4zM0 4h3v1H0zM4 4h3v1H4z" fill="#1a88e0" />}
  </Ic>
);
const Cloud = () => <Ic w={20} h={14}><path d="M4 14a4 4 0 0 1-1-7.500A5 5 0 0 1 12 3a6 6 0 0 1 4 3.500A4 4 0 0 1 16 14z" fill="#1b7fe0" /><path d="M4 14a4 4 0 0 1-1-7.500L9 14z" fill="#29d0c8" /></Ic>;
const Pc = () => <Ic w={18} h={16}><rect width="18" height="12" rx="1" fill="#1d7fa6" /><rect x="1" y="1" width="16" height="10" fill="#22b0d0" /><path d="M9 12v2M5 15h8" stroke="#444" strokeWidth="1.500" /></Ic>;
const PinIc = () => <Ic w={12} h={13}><path d="M7 0l5 5-2 1-2 3-1 2-5-5 2-1 3-2zM3 9l-3 4" fill="#8a8a8a" stroke="#8a8a8a" /></Ic>;
const DllDoc = () => <Ic w={15} h={18}><path d="M.5.500h9l5 5v12h-14zM9.500.500v5h5" fill="#fff" stroke="#666" /><circle cx="6" cy="9" r="2" fill="#8a99a6" /><circle cx="9.500" cy="13" r="2" fill="#555" /></Ic>;
const GripIc = () => <Ic w={10} h={11}><path d="M7 1h3v3H7zM7 4.500h3v3H7zM3.500 4.500h3v3h-3zM7 8h3v3H7zM3.500 8h3v3h-3zM0 8h3v3H0z" fill="#bdbdbd" /></Ic>;

const filler = Array.from({ length: 40 }, (_, i) => i);

const SideItems = [
  { t: '图片', i: <SPic />, pin: 1 },
  { t: '音乐', i: <SMusic />, pin: 1 },
  { t: '视频', i: <SVideo />, pin: 1 },
  { t: 'application', i: <Folder />, latin: 1 },
  { t: '文档 (D:)', i: <Drive /> },
  { t: 'Debug', i: <Folder />, latin: 1 },
  { t: '01UGNX', i: <Folder />, latin: 1 },
  { rule: 1 },
  { t: 'WPS云盘', i: <Cloud />, chev: 'right' },
  { t: '此电脑', i: <Pc />, chev: 'down' },
  { t: '本地磁盘 (C:)', i: <Drive win />, chev: 'right', lvl: 1 },
  { t: '文档 (D:)', i: <Drive />, chev: 'right', lvl: 1, sel: 1 },
];

const crumbs = ['06Code', '01NX', '01cpp', 'code', 'NXOpenCpp', 'x64', 'Debug'];
const menus = ['主页', '曲线', '曲面', '装配', '分析', '视图', '选择', '渲染', '工具'];

export default function App() {
  return (
    <Page>
      <Global />
      <Head>
        <TitleRow>
          <Logo>NX</Logo>
          <QuickBtn $w={33} $sep><QSave /></QuickBtn>
          <QuickBtn $w={26} $sep><QUndo /></QuickBtn>
          <QuickBtn $w={14}><Caret $c="#fff" /></QuickBtn>
          <QuickBtn $w={27}><QUndo c={Dm} flip /></QuickBtn>
          <QuickBtn $w={28} $sep><QFan /></QuickBtn>
          <QuickBtn $w={24}><QCopy /></QuickBtn>
          <QuickBtn $w={24}><QPaste /></QuickBtn>
          <QuickBtn $w={24}><QDel /></QuickBtn>
          <QuickBtn $w={28} $sep><QStar /></QuickBtn>
          <QuickBtn $w={19}><Caret $c="#fff" /></QuickBtn>
          <QuickBtn $w={29} $sep><QMic /></QuickBtn>
          <QuickBtn $w={28} $sep><QTag /></QuickBtn>
          <QuickBtn $w={30} $sep><QWins /></QuickBtn>
          <QuickBtn $w={22}><QWin /></QuickBtn>
          <QuickBtn $w={34}>窗口</QuickBtn>
          <QuickBtn $w={10}><Caret $c="#fff" /></QuickBtn>
          <QuickBtn $w={22}><LineCaret /></QuickBtn>
          <AppTitle>NX - 建模</AppTitle>
          <Brand>SIEMENS</Brand>
          <WinBtns><WinMin /><WinRes /><WinX /></WinBtns>
        </TitleRow>
        <MenuRow>
          <MenuItem $mr={11}>文件(F)</MenuItem>
          {menus.map(m => <MenuItem key={m}>{m}</MenuItem>)}
          <MenuItem $pad={17}>PMI</MenuItem>
          <MenuItem>应用模块</MenuItem>
          <MenuItem $on>开发人员</MenuItem>
          <MenuItem>内部</MenuItem>
          <MenuItem>GeneralTool</MenuItem>
          <HeadSearch>在此输入以搜索<Magn /></HeadSearch>
          <HeadTools><Fullscr /><UpWide /><HelpO /><Bang /></HeadTools>
        </MenuRow>
      </Head>

      <Ribbon>
        <Group $w={224}>
          <GroupBody>
            <Big $w={56} $ml={6}><BigIcon><Expr /></BigIcon>表达式</Big>
            <Big $w={58}><BigIcon><Template /></BigIcon>特征模板<BigCaret><Caret /></BigCaret></Big>
            <Big $w={88} $ml={5}><BigIcon><UserFeat /></BigIcon>用户定义特征<BigCaret><Caret /></BigCaret></Big>
          </GroupBody>
          <GroupFoot><GroupName>实用工具</GroupName><Caret $ml={4} $mr={8} /></GroupFoot>
        </Group>
        <Group $w={226}>
          <GroupBody>
            <Big $w={54}><BigIcon><Film badge="rec" /></BigIcon>录制</Big>
            <Big $w={54} $dim><BigIcon><Film dim badge="pause" /></BigIcon>暂停录制</Big>
            <Big $w={56} $ml={9} $dim><BigIcon><Film dim badge="stop" /></BigIcon>停止录制</Big>
            <Big $w={48}><BigIcon><Film badge="gear" /></BigIcon>设置</Big>
          </GroupBody>
          <GroupFoot><GroupName>电影</GroupName><Caret $ml={4} $mr={8} /></GroupFoot>
        </Group>
        <Group $w={150}>
          <GroupBody>
            <Big $w={90} $ml={9}><BigIcon><Checklist /></BigIcon>执行当前测试</Big>
            <SmallCol $ml={6}>
              <SmallRow><SmallDoc kind="gear" /></SmallRow>
              <SmallRow><SmallDoc kind="plus" /></SmallRow>
              <SmallRow $gap={8}><SmallDoc kind="rec" /><Caret /></SmallRow>
            </SmallCol>
          </GroupBody>
          <GroupFoot><GroupName>Check-Mate</GroupName><Caret $ml={4} $mr={8} /></GroupFoot>
        </Group>
        <Group $w={160}>
          <GroupBody>
            <SmallCol $ml={10}>
              <SmallRow $gap={5}><Fastener />紧固件装配</SmallRow>
              <SmallRow $gap={5}><NavBtn $w={18}><Books /></NavBtn>重用库管理<Caret $ml={8} /></SmallRow>
              <SmallRow $gap={5}><Fastener2 />配置紧固件装配<Caret $ml={6} /></SmallRow>
            </SmallCol>
          </GroupBody>
          <GroupFoot><GroupName>重用库</GroupName><Caret $ml={4} $mr={8} /></GroupFoot>
        </Group>
        <Group $w={379}>
          <GroupBody>
            <Big $w={52}><BigIcon><Round kind="play" /></BigIcon>播放</Big>
            <Big $w={30}><BigIcon><Round kind="rec" /></BigIcon>录制</Big>
            <Big $w={58} $ml={10} $dim><BigIcon><Round kind="pause" dim /></BigIcon>暂停录制</Big>
            <Big $w={58} $ml={6} $dim><BigIcon><Round kind="stop" dim /></BigIcon>停止录制</Big>
            <Big $w={40} $ml={3}><BigIcon><EditAb /></BigIcon>编辑</Big>
            <SmallCol $ml={7}>
              <SmallRow $dim><DimDoc t="bars" />插入用户暂停</SmallRow>
              <SmallRow $dim><DimDoc t="note" />附注</SmallRow>
              <SmallRow $dim><DimDoc t="code" />用户定义代码</SmallRow>
            </SmallCol>
          </GroupBody>
          <GroupFoot><GroupName>操作记录</GroupName><Caret $ml={4} $mr={8} /></GroupFoot>
        </Group>
        <Group $w={175}>
          <GroupBody>
            <WideCol>
              <WideRow><AppMod />应用模块</WideRow>
              <WideRow $dim><DfaDoc />DFA 管理器</WideRow>
            </WideCol>
            <SmallCol $w={24}>
              <SmallRow $center><KfGear m="arrow" /></SmallRow>
              <SmallRow $center><KfGear m="plus" /></SmallRow>
              <SmallRow $center><KfGear m="lock" /></SmallRow>
            </SmallCol>
            <SmallCol $w={26}>
              <SmallRow $center><KfGear m="none" /></SmallRow>
              <SmallRow $center><KfGear m="pen" /></SmallRow>
              <SmallRow $center><KfGear m="none" /></SmallRow>
            </SmallCol>
          </GroupBody>
          <GroupFoot><GroupName>知识融合</GroupName><Caret $ml={4} $mr={8} /></GroupFoot>
        </Group>
        <Group $w={79}>
          <GroupBody>
            <Big $w={78}><BigIcon><BlockUI /></BigIcon>块 UI 样<br />式编辑器</Big>
          </GroupBody>
          <GroupFoot><GroupName>风格化</GroupName><Caret $ml={4} $mr={8} /></GroupFoot>
        </Group>
        <RibbonEnd><Caret /></RibbonEnd>
      </Ribbon>

      <Toolbar>
        <Hamb />
        <MenuLabel>菜单(<u>M</u>)</MenuLabel>
        <Caret />
        <ToolSep $ml={10} $mr={12} />
        <Combo $w={182}>特征<Caret /></Combo>
        <FunnelBox><Funnel /></FunnelBox>
        <Combo $w={192} $ml={7}>整个装配<Caret /></Combo>
        <ToolSep $ml={12} $mr={0} />
        <ToolEnd><Caret /></ToolEnd>
      </Toolbar>

      <Main>
        <Rail>
          <RailItem $h={28}><RGear /></RailItem>
          <RailItem $mt={14}><RParts /></RailItem>
          <RailItem $on><RSolid /></RailItem>
          <RailItem><RBooks /></RailItem>
          <RailItem><REye /></RailItem>
          <RailItem><RPress /></RailItem>
          <RailItem><ROverlap /></RailItem>
          <RailItem><RDrop /></RailItem>
          <RailItem><RCheckDoc /></RailItem>
          <RailItem><RMeasure /></RailItem>
          <RailItem $h={32}><RSearch /></RailItem>
          <RailItem $mt={22}><RGlobe /></RailItem>
          <RailItem $mt={11}><Clock /></RailItem>
          <RailItem $mt={1}><RTools /></RailItem>
        </Rail>
        <Nav>
          <NavHead>部件导航器<MaxBox /></NavHead>
          <Table>
            <Row $head>
              <Cell $head $pl={6} $gap={23}>名称<SortUp /></Cell>
              <Cell $head $pl={7}>当前特征</Cell>
              <Cell $head $pl={7} $last>最新</Cell>
            </Row>
            <TableRows>
              <Row><Cell $pl={19} $gap={5}><Clock s={15} />历史记录建模模式</Cell><Cell /><Cell $last /></Row>
              <Row $alt><Cell $pl={4} $gap={4}><Expander $plus /><TWin />模型视图</Cell><Cell /><Cell $last /></Row>
              <Row><Cell $pl={4} $gap={4}><Expander $plus /><TCheck /><TCam />摄像机</Cell><Cell /><Cell $last /></Row>
              <Row $alt><Cell $pl={4} $gap={4}><Expander /><TSphere /><THist />模型历史记录</Cell><Cell /><Cell $pl={6} $last><TCheck /></Cell></Row>
              <Row><Cell $pl={38} $bold $gap={2}><TEye /><TCube />块 (4)</Cell><Cell $pl={8}><TBlockMark /></Cell><Cell $pl={6} $last><TCheck /></Cell></Row>
              {filler.map(i => <Row key={i} $alt={i % 2 === 0}><Cell /><Cell /><Cell $last /></Row>)}
            </TableRows>
            <HScroll><HThumb /></HScroll>
            <Guides width="200" height="140" fill="none">
              <path d="M10.500 37V110M10.500 37H20M10.500 61H3M10.500 85H3M29.500 120V133H39" stroke="#999" strokeDasharray="1 1.500" />
            </Guides>
          </Table>
          <Splitter />
          <Section><Tri />搜索</Section>
          <Section><Tri />相关性</Section>
          <Section><Tri />细节</Section>
          <Section><Tri />预览</Section>
        </Nav>
        <View>
          <Tabs>
            <Tab $w={108} $pl={8}><TDisc />发现中心</Tab>
            <Tab $w={220} $pl={5} $on><TPart />UIStyler01_BaseUI.prt<TabTail><TabPin /><TabX /></TabTail></Tab>
          </Tabs>
          <Canvas>
            <Scene viewBox="495 233 2065 1124">
              <polygon points="1076,900 1077,1018 1448,1342 1433,900" fill="#666e70" stroke="#333" strokeWidth=".8" />
              <polygon points="1433,900 1400,500 1947,547 1979,571 2003,1102 1448,1342" fill="#878f91" stroke="#444" strokeWidth=".8" />
              <g stroke="#c4c4c4" strokeWidth="1" fill="none">
                <path d="M607 1211L572 1226L596 1247L630 1232ZM572 1226L574 1259L597 1280L596 1247M597 1280L633 1262L630 1232" />
              </g>
              <path d="M630 1233L652 1222L650 1218L663 1219L656 1229L654 1226L632 1238Z" fill="#35a640" />
              <path d="M614 1255L628 1269L631 1266L642 1280L628 1275L630 1272L612 1258Z" fill="#e23a3a" />
              <path d="M598 1229V1204H595L600 1187L605 1204H602V1229Z" fill="#0b3fb5" />
              <text x="600" y="1183" fontSize="12" fill="#2a50d8" textAnchor="middle" fontFamily="Liberation Sans">Z</text>
              <text x="666" y="1220" fontSize="12" fill="#38a845" fontFamily="Liberation Sans">Y</text>
              <text x="644" y="1291" fontSize="12" fill="#d84040" fontFamily="Liberation Sans">X</text>
            </Scene>
          </Canvas>
        </View>
      </Main>

      <Status>
        <div>选择要执行的用户函数程序</div>
        <StatusMid>构建文件选择对话框</StatusMid>
        <Watermark>CSDN @GimiGimmy</Watermark>
      </Status>

      <DialogShadow />
      <Dialog>
        <DTitle><NxMark />执行用户函数<DClose><XThin /></DClose></DTitle>
        <Addr>
          <NavBtn $w={44}><Arrow dir="left" c="#8a8a8a" /></NavBtn>
          <NavBtn $w={44}><Arrow dir="right" c="#8a8a8a" /></NavBtn>
          <NavBtn $w={32}><Chev c="#aaa" s={12} /></NavBtn>
          <NavBtn $w={40}><ArrowUp /></NavBtn>
          <PathBox>
            <Folder />
            <Laquo>«</Laquo>
            {crumbs.map((c, i) => (
              <React.Fragment key={c}>
                {i > 0 && <CrumbSep>›</CrumbSep>}
                <Crumb>{c}</Crumb>
              </React.Fragment>
            ))}
            <PushRight>
              <NavBtn $w={46}><Chev s={13} /></NavBtn>
              <NavBtn $w={48}><Refresh /></NavBtn>
            </PushRight>
          </PathBox>
          <SearchBox>在 Debug 中搜索<Magn c="#666" /></SearchBox>
        </Addr>
        <Band>
          <BandBtn>组织<Caret $c="#26384f" /></BandBtn>
          <BandBtn $ml={39}>新建文件夹</BandBtn>
          <PushRight>
            <NavBtn $w={14}><ListView /></NavBtn>
            <NavBtn $w={12} $ml={12}><Caret $c="#26384f" /></NavBtn>
            <NavBtn $w={18} $ml={27}><PaneIc /></NavBtn>
            <NavBtn $w={20} $ml={27}><HelpBlue /></NavBtn>
          </PushRight>
        </Band>
        <Body>
          <Side>
            {SideItems.map((s, i) => s.rule ? (
              <SideRule key={i}><SideRuleLine /></SideRule>
            ) : (
              <SideRow key={i} $lvl={s.lvl} $sel={s.sel} $latin={s.latin}>
                <SideChev>{s.chev && <Chev dir={s.chev} c={s.chev === 'down' ? '#333' : '#888'} s={12} />}</SideChev>
                <SideIcon>{s.i}</SideIcon>
                {s.t}
                {s.pin && <Pin><PinIc /></Pin>}
              </SideRow>
            ))}
          </Side>
          <Track><Thumb /></Track>
          <List>
            <SortMark><Chev dir="up" c="#888" s={9} /></SortMark>
            <ListHead>
              <HCol $pl={39}>名称</HCol>
              <HCol $pl={7}>修改日期</HCol>
              <HCol $pl={7}>类型</HCol>
              <HCol $pl={7}>大小</HCol>
            </ListHead>
            <FileRow $first>
              <FileName><DllDoc />ExportIges.dll</FileName>
              <FileCol>2023/5/2 22:35</FileCol>
              <FileCol $cjk>应用程序扩展</FileCol>
              <FileCol $right $pr={4}>112 KB</FileCol>
            </FileRow>
            <FileRow $sel>
              <FileName><DllDoc />UFModel.dll</FileName>
              <FileCol>2023/5/3 0:26</FileCol>
              <FileCol $cjk>应用程序扩展</FileCol>
              <FileCol $right $pr={4}>120 KB</FileCol>
            </FileRow>
          </List>
        </Body>
        <Foot1>
          <GoLabel>导航至：</GoLabel>
          <PushBtn $w={167}>工作部件位置</PushBtn>
          <PushBtn $w={197} $ml={116}>输入用户函数参数</PushBtn>
        </Foot1>
        <Foot2>
          <NameRow>
            <NameLabel>文件名(<u>N</u>):</NameLabel>
            <NameInput>UFModel.dll<Chev s={10} /></NameInput>
            <FilterSel>可动态调用的库 (*.dll)<Chev s={10} /></FilterSel>
          </NameRow>
          <BtnRow>
            <PushBtn $w={108} $h={30} $primary>确定</PushBtn>
            <PushBtn $w={108} $h={30}>取消</PushBtn>
          </BtnRow>
          <Grip><GripIc /></Grip>
        </Foot2>
      </Dialog>
    </Page>
  );
}
